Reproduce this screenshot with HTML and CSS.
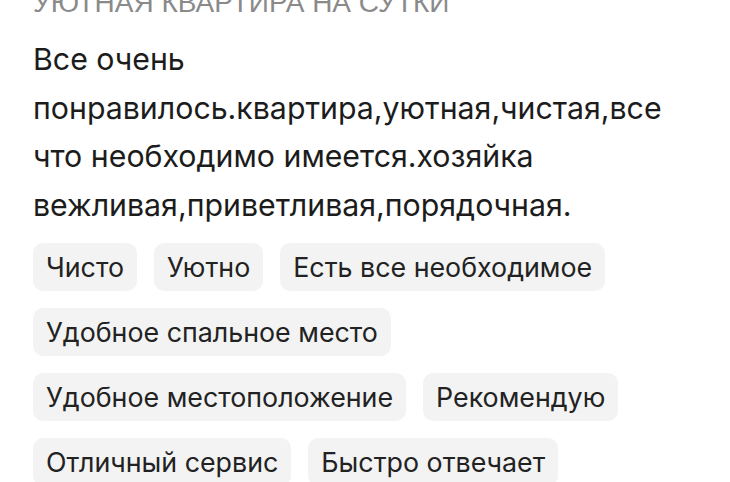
FILE: index.html
```html
<!DOCTYPE html>
<html lang="ru">
<head>
<meta charset="utf-8">
<link rel="stylesheet" href="styles.css">
</head>
<body>
<main class="review">
  <h2 class="review-title">УЮТНАЯ КВАРТИРА НА СУТКИ</h2>
  <p class="review-text">Все очень понравилось.квартира,уютная,чистая,все что необходимо имеется.хозяйка вежливая,приветливая,порядочная.</p>
  <ul class="tags">
    <li class="tag">Чисто</li>
    <li class="tag">Уютно</li>
    <li class="tag">Есть все необходимое</li>
    <li class="tag">Удобное спальное место</li>
    <li class="tag">Удобное местоположение</li>
    <li class="tag">Рекомендую</li>
    <li class="tag">Отличный сервис</li>
    <li class="tag">Быстро отвечает</li>
  </ul>
</main>
</body>
</html>
```
FILE: styles.css
```css
html, body {
  margin: 0;
  padding: 0;
  background: #ffffff;
}
body {
  overflow: hidden;
  height: 482px;
}
.review {
  padding: 0 33px;
}
.review-title {
  margin: -13px 0 0;
  font-family: "Liberation Sans", Arial, sans-serif;
  font-weight: 400;
  font-size: 28px;
  line-height: normal;
  color: #8a8a8a;
  letter-spacing: 0;
}
.review-text {
  margin: 16px 0 0;
  font-family: Inter, "Noto Sans", sans-serif;
  font-size: 30.3px;
  line-height: 48.5px;
  color: #1c1c1c;
}
.tags {
  list-style: none;
  margin: 13.5px 0 0;
  padding: 0;
  display: flex;
  flex-wrap: wrap;
  gap: 17px;
}
.tag {
  background: #f3f3f3;
  border-radius: 10px;
  padding: 8px 13px 8px;
  font-family: Inter, "Noto Sans", sans-serif;
  font-size: 26.8px;
  line-height: 32px;
  color: #222222;
}
```
